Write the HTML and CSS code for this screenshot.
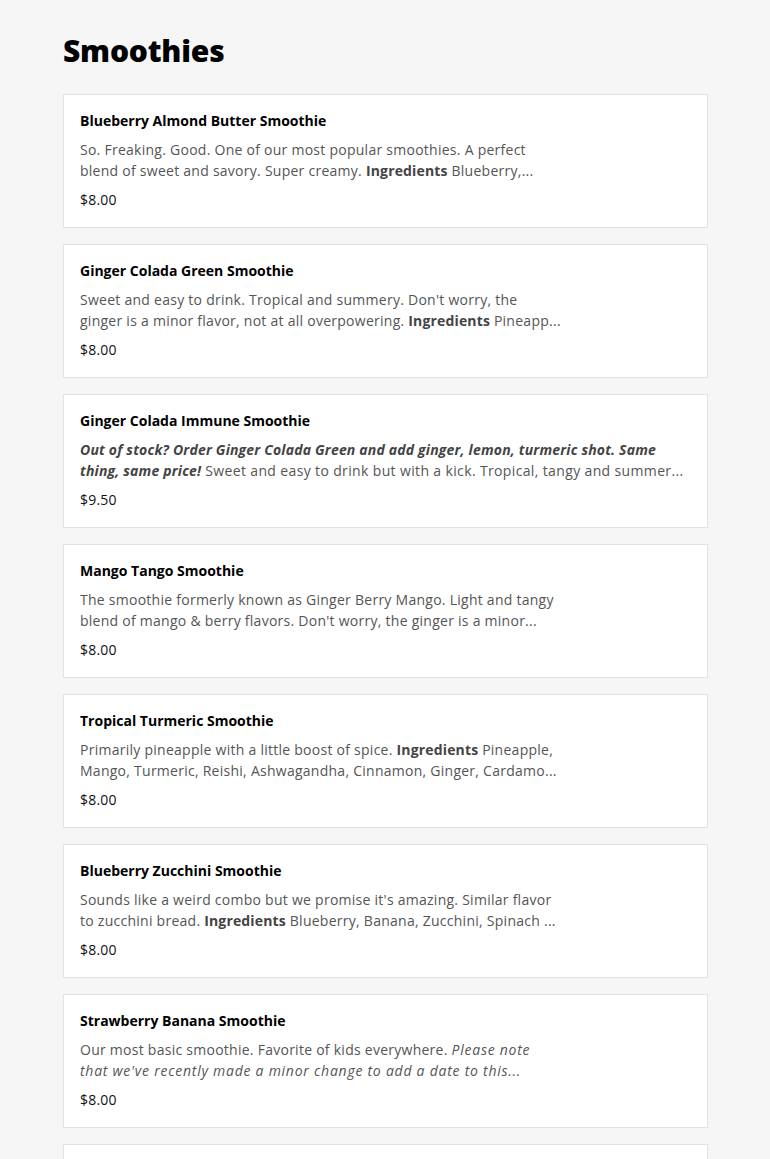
FILE: index.html
```html
<!DOCTYPE html>
<html lang="en">
<head>
<meta charset="utf-8">
<title>Smoothies</title>
<link rel="stylesheet" href="styles.css">
</head>
<body>
<main class="menu">
  <h1 class="menu-title">Smoothies</h1>
  <ul class="items">
    <li class="card">
      <h2 class="name">Blueberry Almond Butter Smoothie</h2>
      <p class="desc">So. Freaking. Good. One of our most popular smoothies. A perfect<br>blend of sweet and savory. Super creamy. <b>Ingredients</b> Blueberry,...</p>
      <p class="price">$8.00</p>
    </li>
    <li class="card">
      <h2 class="name">Ginger Colada Green Smoothie</h2>
      <p class="desc">Sweet and easy to drink. Tropical and summery. Don't worry, the<br>ginger is a minor flavor, not at all overpowering. <b>Ingredients</b> Pineapp...</p>
      <p class="price">$8.00</p>
    </li>
    <li class="card">
      <h2 class="name">Ginger Colada Immune Smoothie</h2>
      <p class="desc desc-long"><b><i>Out of stock? Order Ginger Colada Green and add ginger, lemon, turmeric shot. Same<br>thing, same price!</i></b> Sweet and easy to drink but with a kick. Tropical, tangy and summer...</p>
      <p class="price">$9.50</p>
    </li>
    <li class="card">
      <h2 class="name">Mango Tango Smoothie</h2>
      <p class="desc">The smoothie formerly known as Ginger Berry Mango. Light and tangy<br>blend of mango &amp; berry flavors. Don't worry, the ginger is a minor...</p>
      <p class="price">$8.00</p>
    </li>
    <li class="card">
      <h2 class="name">Tropical Turmeric Smoothie</h2>
      <p class="desc">Primarily pineapple with a little boost of spice. <b>Ingredients</b> Pineapple,<br>Mango, Turmeric, Reishi, Ashwagandha, Cinnamon, Ginger, Cardamo...</p>
      <p class="price">$8.00</p>
    </li>
    <li class="card">
      <h2 class="name">Blueberry Zucchini Smoothie</h2>
      <p class="desc">Sounds like a weird combo but we promise it's amazing. Similar flavor<br>to zucchini bread. <b>Ingredients</b> Blueberry, Banana, Zucchini, Spinach ...</p>
      <p class="price">$8.00</p>
    </li>
    <li class="card">
      <h2 class="name">Strawberry Banana Smoothie</h2>
      <p class="desc">Our most basic smoothie. Favorite of kids everywhere. <i>Please note<br>that we've recently made a minor change to add a date to this...</i></p>
      <p class="price">$8.00</p>
    </li>
    <li class="card">
      <h2 class="name">Peanut Butter Cup Smoothie</h2>
      <p class="desc">Rich and chocolatey with peanut butter. A dessert you can feel<br>good about.</p>
      <p class="price">$8.00</p>
    </li>
  </ul>
</main>
</body>
</html>
```
FILE: styles.css
```css
html, body {
  margin: 0;
  padding: 0;
  background: #f6f6f6;
}
body {
  font-family: "Open Sans", "Liberation Sans", sans-serif;
  color: #111;
}
.menu {
  padding: 30px 62px 0 63px;
}
.menu-title {
  margin: 0 0 22px 0;
  font-weight: 800;
  font-size: 30px;
  line-height: 42px;
  letter-spacing: -0.2px;
  color: #000;
}
.items {
  list-style: none;
  margin: 0;
  padding: 0;
  display: flex;
  flex-direction: column;
  gap: 16px;
}
.card {
  background: #fff;
  border: 1px solid #e2e2e2;
  padding: 16px 16px 17px;
  display: flex;
  flex-direction: column;
  gap: 8px;
}
.name {
  margin: 0;
  font-size: 14px;
  font-weight: 700;
  line-height: 20px;
  color: #000;
}
.desc {
  margin: 0;
  font-size: 14px;
  line-height: 21px;
  letter-spacing: 0.26px;
  white-space: nowrap;
  overflow: hidden;
  color: #555;
}
.desc-long {
  letter-spacing: 0.36px;
}
.desc b {
  color: #444;
  letter-spacing: 0.15px;
}
.desc i {
  letter-spacing: 0.75px;
}
.desc b i {
  letter-spacing: 0.18px;
}
.price {
  margin: 0;
  font-size: 14px;
  line-height: 21px;
  letter-spacing: 0.2px;
  color: #111;
}
```
